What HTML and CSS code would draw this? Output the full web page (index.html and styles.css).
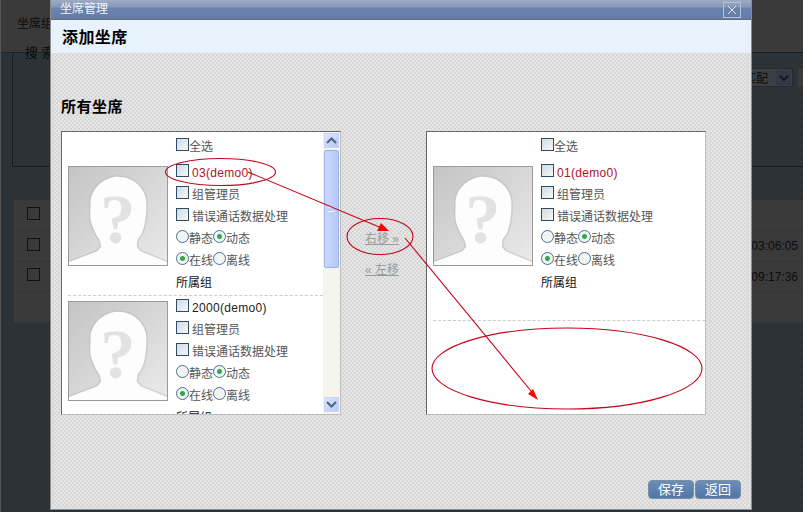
FILE: index.html
```html
<!DOCTYPE html>
<html lang="zh-CN">
<head>
<meta charset="utf-8">
<title>坐席管理</title>
<link rel="stylesheet" href="styles.css">
</head>
<body>
<svg class="defs" width="0" height="0" aria-hidden="true">
  <symbol id="avatar" viewBox="0 0 100 100">
    <defs>
      <linearGradient id="avatar-bg" x1="0" y1="0" x2="1" y2="1">
        <stop offset="0" stop-color="#c4c4c4"/>
        <stop offset="1" stop-color="#eaeaea"/>
      </linearGradient>
    </defs>
    <rect width="100" height="100" fill="url(#avatar-bg)"/>
    <path d="M0 99V97L29 86 33 81 31 74C27 69 25 63 23 58 21 51 22 44 22 37 22 21 37 10 50 10 65 10 79 21 79 38 79 47 78 60 74 68L70 74 69 81 73 86 100 97V100H0Z" fill="#a8a8a8" stroke="#b8b8b8" stroke-width="3" opacity=".45"/>
    <path d="M0 99V97L29 86 33 81 31 74C27 69 25 63 23 58 21 51 22 44 22 37 22 21 37 10 50 10 65 10 79 21 79 38 79 47 78 60 74 68L70 74 69 81 73 86 100 97V100H0Z" fill="#fdfdfd"/>
    <text x="50" y="78" text-anchor="middle" font-family="Liberation Serif, serif" font-weight="700" font-size="72" fill="#e2e2e2">?</text>
  </symbol>
</svg>

<div class="page">
  <header class="bg-head"><span class="bg-label">坐席组</span></header>
  <fieldset class="bg-search">
    <legend>搜 索</legend>
    <div class="bg-filter">
      <div class="bg-select"><span>匹配</span><i class="bg-select-arrow"><svg width="10" height="6" viewBox="0 0 10 6"><path d="M1 1l4 4 4-4" fill="none" stroke="#15151f" stroke-width="2"/></svg></i></div>
      <div class="bg-chip"></div>
    </div>
  </fieldset>
  <section class="bg-table">
    <div class="bg-row"><i class="bg-check"></i></div>
    <div class="bg-row"><i class="bg-check"></i><span class="bg-time">03:06:05</span></div>
    <div class="bg-row"><i class="bg-check"></i><span class="bg-time">09:17:36</span></div>
    <div class="bg-row"></div>
  </section>

  <div class="modal">
    <div class="modal-title">
      <span class="modal-title-text">坐席管理</span>
      <button class="close" type="button" aria-label="关闭"><svg width="10" height="10" viewBox="0 0 10 10"><path d="M1 1l8 8M9 1l-8 8" stroke="#dfe6f0" stroke-width="1"/></svg></button>
    </div>
    <div class="modal-sub">添加坐席</div>
    <div class="modal-body">
      <h2 class="section-title">所有坐席</h2>
      <div class="transfer">
        <div class="list">
          <div class="list-scroll">
            <label class="select-all"><input type="checkbox">全选</label>
            <div class="card">
              <svg class="photo"><use href="#avatar"/></svg>
              <div class="fields">
                <label class="field name red"><input type="checkbox">03(demo0)</label>
                <label class="field spaced"><input type="checkbox">组管理员</label>
                <label class="field spaced"><input type="checkbox">错误通话数据处理</label>
                <div class="field"><input type="radio" name="a1">静态<input type="radio" name="a1" checked>动态</div>
                <div class="field"><input type="radio" name="b1" checked>在线<input type="radio" name="b1">离线</div>
                <div class="field group">所属组</div>
              </div>
            </div>
            <div class="card">
              <svg class="photo"><use href="#avatar"/></svg>
              <div class="fields">
                <label class="field name dark"><input type="checkbox">2000(demo0)</label>
                <label class="field spaced"><input type="checkbox">组管理员</label>
                <label class="field spaced"><input type="checkbox">错误通话数据处理</label>
                <div class="field"><input type="radio" name="a2">静态<input type="radio" name="a2" checked>动态</div>
                <div class="field"><input type="radio" name="b2" checked>在线<input type="radio" name="b2">离线</div>
                <div class="field group">所属组</div>
              </div>
            </div>
          </div>
          <div class="scrollbar">
            <div class="sb-btn"><svg width="11" height="7" viewBox="0 0 11 7"><path d="M1 6l4.500-4.500L10 6" fill="none" stroke="#4d6185" stroke-width="2"/></svg></div>
            <div class="sb-thumb"><i></i></div>
            <div class="sb-btn"><svg width="11" height="7" viewBox="0 0 11 7"><path d="M1 1l4.500 4.500L10 1" fill="none" stroke="#4d6185" stroke-width="2"/></svg></div>
          </div>
        </div>

        <div class="moves">
          <a class="move" href="#">右移 »</a>
          <a class="move" href="#">« 左移</a>
        </div>

        <div class="list">
          <div class="list-scroll">
            <label class="select-all"><input type="checkbox">全选</label>
            <div class="card card-tall">
              <svg class="photo"><use href="#avatar"/></svg>
              <div class="fields">
                <label class="field name red"><input type="checkbox">01(demo0)</label>
                <label class="field spaced"><input type="checkbox">组管理员</label>
                <label class="field spaced"><input type="checkbox">错误通话数据处理</label>
                <div class="field"><input type="radio" name="a3">静态<input type="radio" name="a3" checked>动态</div>
                <div class="field"><input type="radio" name="b3" checked>在线<input type="radio" name="b3">离线</div>
                <div class="field group">所属组</div>
              </div>
            </div>
          </div>
        </div>
      </div>
      <div class="actions">
        <button class="btn" type="button">保存</button>
        <button class="btn" type="button">返回</button>
      </div>
    </div>
  </div>

  <svg class="marks" width="803" height="512" viewBox="0 0 803 512" aria-hidden="true">
    <g fill="none" stroke="#c4041c" stroke-width="1.100">
      <ellipse cx="220.500" cy="172" rx="55" ry="13.500"/>
      <ellipse cx="380" cy="236.500" rx="33" ry="18"/>
      <ellipse cx="567" cy="368.500" rx="135" ry="40.500"/>
      <path d="M248 172L384 229"/>
      <path d="M405 238L536 397"/>
    </g>
    <path d="M381 223L377 231H389Z" fill="#f00"/>
    <path d="M538 400L528 394 533 389Z" fill="#f00"/>
  </svg>
</div>
</body>
</html>
```
FILE: styles.css
```css
* { box-sizing: border-box; }
html, body { margin: 0; height: 100%; }
body {
  font-family: "Liberation Sans", "Noto Sans CJK SC", sans-serif;
  font-size: 12px;
  background: #000;
  overflow: hidden;
}
.defs { position: absolute; }

.page {
  position: relative;
  width: 803px;
  height: 512px;
  overflow: hidden;
  color: #0c0c0c;
  border-left: 1px solid #555;
  background: #2b3338 repeating-conic-gradient(#283035 0 25%, #2e363b 0 50%) 0 0 / 4px 4px;
}

/* dimmed page behind the dialog */
.bg-head {
  height: 53px;
  padding: 17px 0 0 16px;
  background: #3a3a3a;
  border-bottom: 1px solid #222;
  line-height: 14px;
}
.bg-search {
  margin: -7px -40px 0 11px;
  padding: 0;
  height: 121px;
  border: 1px solid #1c1c1c;
}
.bg-search legend {
  margin-left: 10px;
  padding: 0 2px;
  font-size: 13px;
  line-height: 13px;
}
.bg-filter {
  display: flex;
  justify-content: flex-end;
  gap: 5px;
  padding: 9px 24px 0 0;
}
.bg-select {
  display: flex;
  align-items: center;
  justify-content: space-between;
  width: 52px;
  height: 19px;
  padding: 0 1px 0 2px;
  font-size: 12px;
  border: 1px solid #232a30;
  background: #3a3f42;
}
.bg-select-arrow {
  display: flex;
  align-items: center;
  justify-content: center;
  width: 15px;
  height: 15px;
  background: #343844;
}
.bg-chip {
  width: 20px;
  height: 19px;
  background: #3a3a3a;
}
.bg-table {
  margin: 33px 0 0 13px;
  background: #3a3a3a;
}
.bg-row {
  display: flex;
  align-items: center;
  justify-content: space-between;
  height: 30.750px;
  padding: 0 5px 0 13px;
  border-bottom: 1px solid #343434;
  font-size: 12px;
}
.bg-check {
  width: 13px;
  height: 13px;
  margin-top: -3px;
  border: 1px solid #111;
}
.bg-time { padding-top: 1px; }

/* dialog */
.modal {
  position: absolute;
  left: 49px;
  top: 0;
  width: 702px;
  height: 510px;
  display: flex;
  flex-direction: column;
  border: 1px solid #8c8c8c;
  border-top: 0;
  color: #555;
}
.modal-title {
  display: flex;
  align-items: center;
  justify-content: space-between;
  flex: none;
  height: 20px;
  padding: 0 10px 0 9px;
  color: #f2f4f8;
  font-size: 12px;
  background: linear-gradient(#9eacc5 0, #8797b7 7px, #6b84ad 8px, #627da8 19px);
  border-bottom: 1px solid #6b6b6b;
}
.modal-title-text { margin-top: -5px; }
.close {
  display: flex;
  align-items: center;
  justify-content: center;
  width: 18px;
  height: 16px;
  padding: 0;
  background: transparent;
  border: 1px solid #b4c2d8;
}
.modal-sub {
  flex: none;
  height: 33px;
  padding: 9px 0 0 11px;
  color: #000;
  font-size: 16px;
  font-weight: 700;
  line-height: 18px;
  letter-spacing: .4px;
  background: #e7f2fd;
}
.modal-body {
  flex: 1;
  display: flex;
  flex-direction: column;
  padding: 0 10px 10px;
  background-color: #e6e6e6;
  background-image:
    radial-gradient(circle, #d6d6d6 .9px, transparent 1.100px),
    radial-gradient(circle, #d6d6d6 .9px, transparent 1.100px);
  background-size: 4px 4px;
  background-position: 0 0, 2px 2px;
}
.section-title {
  margin: 45px 0 15px;
  color: #000;
  font-size: 15px;
  font-weight: 700;
  line-height: 18px;
  letter-spacing: .5px;
}
.transfer { display: flex; align-items: stretch; }

.list {
  display: flex;
  width: 280px;
  height: 284px;
  background: #fff;
  border: 1px solid #bdbdbd;
  border-top-color: #666;
  border-left-color: #666;
}
.list-scroll {
  flex: 1;
  min-width: 0;
  overflow: hidden;
  padding: 3px 0 0 6px;
}
.select-all {
  display: flex;
  height: 26px;
  line-height: 24px;
  padding-left: 108px;
}
.card {
  display: flex;
  gap: 8px;
  height: 135px;
  border-bottom: 1px dashed #ccc;
}
.card-tall { height: 160px; }
.photo {
  flex: none;
  width: 100px;
  height: 100px;
  margin-top: 5px;
  border: 1px solid #9a9a9a;
}
.fields { flex: 1; }
.field {
  display: flex;
  height: 22px;
  line-height: 24px;
  white-space: nowrap;
}
.field.name { letter-spacing: .3px; }
.red { color: #b3101f; }
.dark { color: #222; }
.group { color: #111; }

input[type="checkbox"], input[type="radio"] {
  flex: none;
  appearance: none;
  width: 13px;
  height: 13px;
  margin: 3px 0 0;
  background: linear-gradient(135deg, #cfdbe2, #f6f8f8);
  border: 1px solid #2f4c66;
}
input[type="radio"] {
  border-radius: 50%;
  border-color: #4d6d8c;
  background: #f2f5f6;
}
input[type="radio"]:checked {
  background: radial-gradient(circle, #2fa84a 0 2px, #f2f5f6 3px);
}
.spaced input[type="checkbox"], .name input[type="checkbox"] { margin-right: 3px; }

.scrollbar {
  flex: none;
  width: 17px;
  display: flex;
  flex-direction: column;
  gap: 2px;
  padding: 1px 1px 2px;
  background: #f5f5ee;
}
.sb-btn {
  flex: none;
  display: flex;
  align-items: center;
  justify-content: center;
  height: 15px;
  background: linear-gradient(135deg, #dde6fb, #b7c9f6);
  border: 1px solid #c9d5f2;
}
.sb-thumb {
  flex: none;
  height: 118px;
  display: flex;
  align-items: center;
  justify-content: center;
  background: linear-gradient(90deg, #c9d7fb, #b5c8f6);
  border: 1px solid #9db2e4;
  border-radius: 2px;
  margin-bottom: auto;
}
.sb-thumb i {
  width: 7px;
  height: 5px;
  border-top: 1px solid #eef2fd;
  border-bottom: 1px solid #eef2fd;
}

.moves {
  flex: none;
  width: 85px;
  display: flex;
  flex-direction: column;
  align-items: center;
  gap: 15px;
  padding: 100px 3px 0 0;
}
.move {
  color: #999;
  font-size: 12px;
  line-height: 16px;
  text-decoration: underline;
}

.actions {
  display: flex;
  justify-content: flex-end;
  gap: 1px;
  margin-top: auto;
}
.btn {
  width: 46px;
  height: 19px;
  padding: 0;
  color: #fff;
  font: 13px/17px "Liberation Sans", "Noto Sans CJK SC", sans-serif;
  background: linear-gradient(#6d8db8, #5076a6);
  border: 1px solid #7b8ea8;
  border-radius: 4px;
}

.marks {
  position: absolute;
  left: -1px;
  top: 0;
  pointer-events: none;
}
```
